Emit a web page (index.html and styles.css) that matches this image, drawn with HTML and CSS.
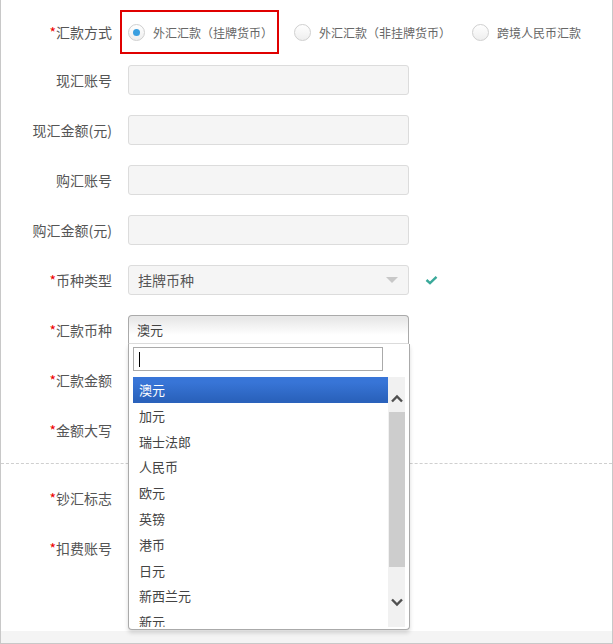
FILE: index.html
```html
<!DOCTYPE html>
<html lang="zh-CN">
<head>
<meta charset="utf-8">
<title>汇款</title>
<link rel="stylesheet" href="styles.css">
</head>
<body>
<div class="frame">
  <div class="form">
    <div class="row row-radio">
      <div class="label"><span class="req">*</span>汇款方式</div>
      <div class="radios">
        <label class="opt opt-active"><span class="radio checked"></span><span>外汇汇款（挂牌货币）</span></label>
        <label class="opt"><span class="radio"></span><span>外汇汇款（非挂牌货币）</span></label>
        <label class="opt"><span class="radio"></span><span>跨境人民币汇款</span></label>
      </div>
    </div>
    <div class="row row-after-radio">
      <div class="label">现汇账号</div>
      <div class="field"></div>
    </div>
    <div class="row">
      <div class="label">现汇金额(元)</div>
      <div class="field"></div>
    </div>
    <div class="row">
      <div class="label">购汇账号</div>
      <div class="field"></div>
    </div>
    <div class="row">
      <div class="label">购汇金额(元)</div>
      <div class="field"></div>
    </div>
    <div class="row">
      <div class="label"><span class="req">*</span>币种类型</div>
      <div class="field select"><span>挂牌币种</span><span class="caret"></span></div>
      <svg class="check" width="13" height="10" viewBox="0 0 13 10"><path d="M1.5 5 L5 8.2 L11.5 1.8" fill="none" stroke="#3aa99a" stroke-width="2.4"/></svg>
    </div>
    <div class="row">
      <div class="label"><span class="req">*</span>汇款币种</div>
      <div class="chosen">
        <div class="chosen-single">澳元</div>
        <div class="chosen-drop">
          <div class="search"><span class="cursor"></span></div>
          <div class="results">
            <ul class="list">
              <li class="hl">澳元</li>
              <li>加元</li>
              <li>瑞士法郎</li>
              <li>人民币</li>
              <li>欧元</li>
              <li>英镑</li>
              <li>港币</li>
              <li>日元</li>
              <li>新西兰元</li>
              <li>新元</li>
            </ul>
            <div class="sb">
              <div class="sb-up"><svg width="12" height="9" viewBox="0 0 12 9"><path d="M1 7.5 L6 2.5 L11 7.5" fill="none" stroke="#505050" stroke-width="2.4"/></svg></div>
              <div class="sb-thumb"></div>
              <div class="sb-down"><svg width="12" height="9" viewBox="0 0 12 9"><path d="M1 1.5 L6 6.5 L11 1.5" fill="none" stroke="#505050" stroke-width="2.4"/></svg></div>
            </div>
          </div>
        </div>
      </div>
    </div>
    <div class="row">
      <div class="label"><span class="req">*</span>汇款金额</div>
    </div>
    <div class="row">
      <div class="label"><span class="req">*</span>金额大写</div>
    </div>
    <div class="sep"></div>
    <div class="row row-after-sep">
      <div class="label"><span class="req">*</span>钞汇标志</div>
    </div>
    <div class="row">
      <div class="label"><span class="req">*</span>扣费账号</div>
    </div>
  </div>
  <div class="footer"></div>
</div>
</body>
</html>
```
FILE: styles.css
```css
html, body {
  margin: 0;
  padding: 0;
  background: #fff;
}
body {
  font-family: "Noto Sans CJK SC", "Liberation Sans", sans-serif;
  font-size: 14px;
  color: #555;
}
.frame {
  width: 613px;
  height: 644px;
  box-sizing: border-box;
  border: 1px solid #c8c8c8;
  border-top: 0;
  display: flex;
  flex-direction: column;
}
.form {
  flex: 1;
  padding-top: 10px;
  display: flex;
  flex-direction: column;
}
.footer {
  height: 12px;
  background: #f4f4f4;
}
.row {
  display: flex;
  align-items: center;
  height: 30px;
  margin-top: 20px;
  flex: none;
}
.row-radio {
  height: 44px;
  margin-top: 0;
}
.row-after-radio {
  margin-top: 11px;
}
.row-after-sep {
  margin-top: 19px;
}
.label {
  width: 111px;
  margin-right: 16px;
  flex: none;
  text-align: right;
  white-space: nowrap;
  color: #555;
}
.req {
  color: #e00;
}
.radios {
  display: flex;
  margin-left: -8px;
  height: 44px;
}
.opt {
  display: flex;
  align-items: center;
  box-sizing: border-box;
  height: 44px;
  border: 2px solid transparent;
  padding: 0 4px 0 6px;
  font-size: 12px;
  color: #666;
  white-space: nowrap;
}
.opt + .opt {
  margin-left: 7px;
}
.opt-active {
  border-color: #e00000;
}
.radio {
  width: 17px;
  height: 17px;
  box-sizing: border-box;
  border: 1px solid #cfcfcf;
  border-radius: 50%;
  background: linear-gradient(#ffffff, #eeeeee);
  margin-right: 8px;
  display: flex;
  align-items: center;
  justify-content: center;
  flex: none;
}
.radio.checked::after {
  content: "";
  width: 7px;
  height: 7px;
  border-radius: 50%;
  background: #3a9fe0;
}
.field {
  width: 281px;
  height: 30px;
  box-sizing: border-box;
  background: #f5f5f5;
  border: 1px solid #dcdcdc;
  border-radius: 3px;
  flex: none;
}
.field.select {
  display: flex;
  align-items: center;
  justify-content: space-between;
  padding: 0 10px 0 9px;
  color: #555;
}
.caret {
  width: 0;
  height: 0;
  border-left: 6px solid transparent;
  border-right: 6px solid transparent;
  border-top: 6px solid #c8c8c8;
}
.check {
  margin-left: 16px;
}
.chosen {
  position: relative;
  width: 281px;
  height: 30px;
  flex: none;
  font-size: 13px;
}
.chosen-single {
  height: 29px;
  box-sizing: border-box;
  border: 1px solid #aaa;
  border-bottom-color: #ddd;
  border-radius: 4px 4px 0 0;
  background: linear-gradient(#e8e8e8 10%, #ffffff 70%);
  padding: 0 8px;
  line-height: 28px;
  color: #444;
}
.chosen-drop {
  position: absolute;
  top: 29px;
  left: 0;
  width: 282px;
  box-sizing: border-box;
  background: #fff;
  border: 1px solid #aaa;
  border-top: 0;
  border-radius: 0 0 4px 4px;
  box-shadow: 0 3px 4px rgba(0, 0, 0, 0.15);
  padding: 3px 4px 2px 4px;
  z-index: 10;
}
.search {
  width: 250px;
  height: 24px;
  box-sizing: border-box;
  border: 1px solid #aaa;
  display: flex;
  align-items: center;
  padding-left: 5px;
}
.cursor {
  width: 1px;
  height: 15px;
  background: #000;
}
.results {
  margin-top: 6px;
  display: flex;
  height: 250px;
}
.list {
  list-style: none;
  margin: 0;
  padding: 0;
  width: 255px;
  height: 250px;
  overflow: hidden;
}
.list li {
  height: 25.8px;
  line-height: 25.8px;
  padding: 0 6px;
  color: #444;
  white-space: nowrap;
}
.list li.hl {
  background: linear-gradient(#3875d7 20%, #2a62bc 90%);
  color: #fff;
}
.sb {
  width: 17px;
  height: 250px;
  background: #f1f1f1;
  display: flex;
  flex-direction: column;
  align-items: center;
}
.sb-up {
  height: 35px;
  display: flex;
  flex-direction: column;
  align-items: center;
  padding-top: 17px;
  box-sizing: border-box;
}
.sb-thumb {
  width: 16px;
  height: 155px;
  background: #cdcdcd;
  margin-left: 1px;
}
.sb-down {
  padding-top: 31px;
}
.sb svg {
  display: block;
}
.sep {
  margin-top: 18px;
  border-top: 1px dashed #cfcfcf;
  flex: none;
}
```
